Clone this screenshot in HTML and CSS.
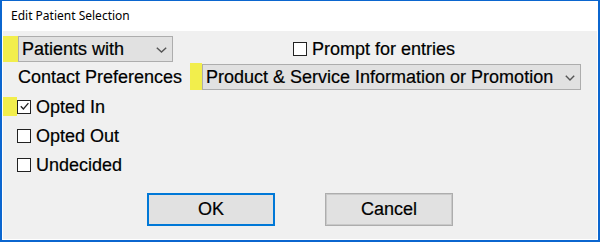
FILE: index.html
```html
<!DOCTYPE html>
<html>
<head>
<meta charset="utf-8">
<title>Edit Patient Selection</title>
<link rel="stylesheet" href="styles.css">
</head>
<body>
<div class="window">
  <div class="titlebar">Edit Patient Selection</div>
  <div class="content">
    <div class="row row-top">
      <div class="marker marker-a"></div>
      <div class="select select-a">
        <span class="select-text">Patients with</span>
        <svg class="chev" width="11" height="6" viewBox="0 0 11 6"><polyline points="0.8,0.8 5.5,5 10.2,0.8" fill="none" stroke="#555" stroke-width="1.4"/></svg>
      </div>
      <label class="check prompt">
        <span class="box"></span>
        <span class="check-text">Prompt for entries</span>
      </label>
    </div>
    <div class="row row-second">
      <div class="label">Contact Preferences</div>
      <div class="marker marker-b"></div>
      <div class="select select-b">
        <span class="select-text">Product &amp; Service Information or Promotion</span>
        <svg class="chev" width="10" height="6" viewBox="0 0 10 6"><polyline points="0.8,0.8 5,5 9.2,0.8" fill="none" stroke="#555" stroke-width="1.4"/></svg>
      </div>
    </div>
    <div class="options">
      <div class="opt">
        <div class="marker marker-c"></div>
        <label class="check">
          <span class="box"><svg width="11" height="11" viewBox="0 0 11 11"><polyline points="1.8,5.2 4.4,8 9.4,2.2" fill="none" stroke="#222" stroke-width="1.3"/></svg></span>
          <span class="check-text">Opted In</span>
        </label>
      </div>
      <div class="opt">
        <label class="check indent">
          <span class="box"></span>
          <span class="check-text">Opted Out</span>
        </label>
      </div>
      <div class="opt">
        <label class="check indent">
          <span class="box"></span>
          <span class="check-text">Undecided</span>
        </label>
      </div>
    </div>
    <div class="buttons">
      <button class="btn btn-default">OK</button>
      <button class="btn">Cancel</button>
    </div>
  </div>
</div>
</body>
</html>
```

FILE: styles.css
```css
* { box-sizing: border-box; }
html, body { margin: 0; padding: 0; }
body {
  width: 600px;
  height: 242px;
  overflow: hidden;
  background: #ffffff;
}
.window {
  width: 600px;
  height: 242px;
  display: flex;
  flex-direction: column;
  border-style: solid;
  border-color: #0b66cf;
  border-width: 1px 2px 2px 2px;
}
.titlebar {
  height: 30px;
  background: #ffffff;
  padding-left: 9px;
  font-family: "Noto Sans", "Open Sans", sans-serif;
  font-size: 12px;
  line-height: 29px;
  color: #000;
}
.content {
  flex: 1;
  background: #f0f0f0;
  border-style: solid;
  border-color: #ffffff;
  border-width: 0 1px 1px 1px;
  padding-top: 4px;
  font-family: "Liberation Sans", Arial, sans-serif;
  font-size: 18px;
  color: #000;
  -webkit-text-stroke: 0.2px #000;
}
.row {
  display: flex;
  align-items: center;
}
.row-top { height: 27px; }
.row-second { height: 27px; margin-top: 1px; }
.marker { background: #f2ee4c; flex: none; }
.marker-a { width: 15px; height: 26px; margin-top: 1px; }
.marker-b { width: 12px; height: 27px; }
.marker-c { width: 14px; height: 19px; }
.select {
  flex: none;
  height: 26px;
  display: flex;
  align-items: center;
  justify-content: space-between;
  background: #e1e1e1;
  border: 1px solid #adadad;
  padding: 0 4px 0 3px;
  white-space: nowrap;
}
.select-a { width: 155px; }
.select-a .chev { margin-right: 1px; margin-top: 2px; }
.select-b { width: 379px; }
.select-b .chev { margin-right: 1px; margin-top: 2px; }
.select-text { line-height: 20px; }
.check {
  display: flex;
  align-items: center;
  white-space: nowrap;
}
.box {
  width: 14px;
  height: 14px;
  border: 1px solid #222;
  background: #ffffff;
  flex: none;
  display: flex;
  align-items: center;
  justify-content: center;
}
.check-text { margin-left: 5px; line-height: 20px; }
.prompt { margin-left: 120px; margin-top: 1px; }
.label {
  width: 187px;
  padding-left: 15px;
  white-space: nowrap;
  margin-top: 1px;
}
.options {
  margin-top: 2px;
}
.opt {
  height: 29px;
  display: flex;
  align-items: center;
}
.indent { margin-left: 14px; }
.buttons {
  display: flex;
  justify-content: center;
  gap: 50px;
  margin-top: 14px;
}
.btn {
  width: 128px;
  height: 33px;
  background: #e1e1e1;
  border: 1px solid #adadad;
  box-shadow: inset 0 0 0 1px #c9c9c9;
  font-family: "Liberation Sans", Arial, sans-serif;
  font-size: 18px;
  color: #000;
  -webkit-text-stroke: 0.2px #000;
  padding: 0;
  margin: 0;
}
.btn-default {
  border: 2px solid #0078d7;
  box-shadow: none;
}
```
